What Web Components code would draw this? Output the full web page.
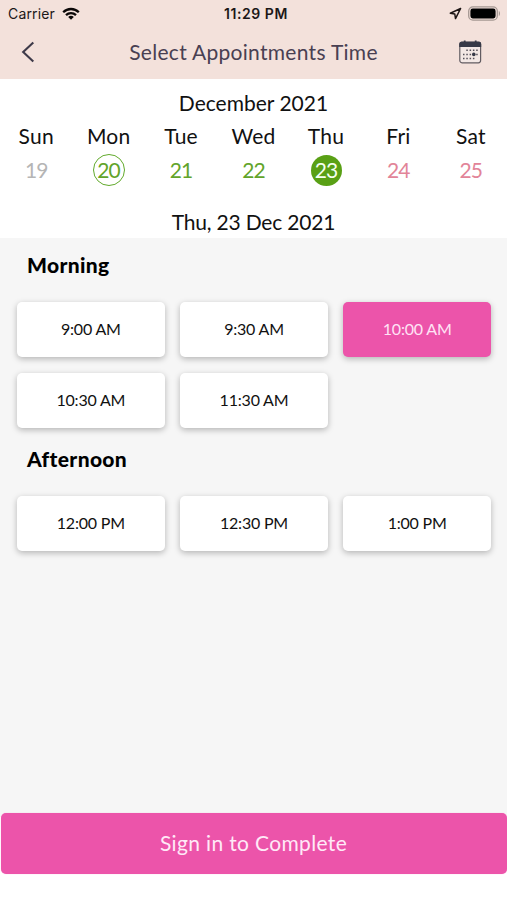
<!DOCTYPE html>
<html lang="en">
<head>
<meta charset="utf-8">
<title>Select Appointments Time</title>
<style>
html,body{margin:0;padding:0;background:#fff}
body{width:507px;height:900px;overflow:hidden;font-family:Lato,"Open Sans",sans-serif;color:#111}
</style>
</head>
<body>
<appointment-screen></appointment-screen>
<script>
const define = (name, html, setup) => {
  const template = document.createElement('template');
  template.innerHTML = html;
  customElements.define(name, class extends HTMLElement {
    constructor() {
      super();
      this.attachShadow({ mode: 'open' }).append(template.content.cloneNode(true));
      if (setup) setup(this.shadowRoot);
    }
  });
};

define('status-bar', `
<style>
:host{display:grid;grid-template-columns:1fr auto 1fr;align-items:center;height:28px;box-sizing:border-box;padding:0 6px 2px 8px;font-family:Inter,Roboto,sans-serif;font-size:14px;line-height:18px;color:#1c1717}
.left,.right{display:flex;align-items:center}
.left{gap:7px;letter-spacing:.15px}
.left span,.time{padding-top:2px}
.right{justify-content:flex-end;gap:6px}
.time{font-weight:600;letter-spacing:.55px;padding-left:3px}
svg{display:block}
</style>
<div class="left"><span>Carrier</span>
<svg width="18" height="13" viewBox="0 0 18 13" fill="none" stroke="#0b0808" stroke-width="2.3"><path d="M1.2 5.2C5.6.9 12.4.9 16.8 5.2"/><path d="M4 8.1c2.8-2.7 7.2-2.7 10 0"/><path d="M9 12.7L6.2 9.9c1.6-1.5 4-1.5 5.6 0z" fill="#0b0808" stroke="none"/></svg></div>
<span class="time">11:29 PM</span>
<div class="right">
<svg width="13" height="13" viewBox="0 0 13 13" fill="none" stroke="#1c1515" stroke-width="1.5" stroke-linejoin="round"><path d="M11.6 1.5L1.3 6.3l4.5.7.7 4.6z"/></svg>
<svg width="33" height="15" viewBox="0 0 33 15"><rect x=".7" y=".9" width="28.6" height="13.2" rx="4.2" fill="none" stroke="#a59893" stroke-width="1.3"/><rect x="2.4" y="2.6" width="25.2" height="9.8" rx="2.3" fill="#000"/><path d="M30.8 5v5c1.6-.6 1.6-4.4 0-5z" fill="#a59893"/></svg>
</div>`);

define('nav-bar', `
<style>
:host{display:grid;grid-template-columns:1fr auto 1fr;align-items:center;height:51px;box-sizing:border-box;padding:0 25px 3px 21px;color:#494052}
.title{font-size:21px;line-height:26px;letter-spacing:.3px;padding-left:4px}
.action{justify-self:end}
svg{display:block}
</style>
<svg width="14" height="22" viewBox="0 0 14 22" fill="none" stroke="#3e3a49" stroke-width="2.1"><path d="M12.3 1.6L2.2 11l10.1 9.4"/></svg>
<span class="title"><slot></slot></span>
<svg class="action" width="24" height="24" viewBox="0 0 24 24"><rect x="1.8" y="2.2" width="20.8" height="20.6" rx="2.2" fill="#f3e8e5" stroke="#625c62" stroke-width="1.2"/><path d="M1.2 7V4q0-2.2 2.2-2.2h17.8q2 0 2 2.2v3z" fill="#363947"/><path d="M6.7.6v3M17.7.6v3" stroke="#363947" stroke-width="1.8"/><g stroke="#55505a" stroke-width="1.5" stroke-dasharray="1.5 1.8"><path d="M8.3 10.3H20M5 14.4h15M5 18.4h11.5"/></g><circle cx="15.8" cy="14.4" r="1.8" fill="#363947"/></svg>`);

define('calendar-day', `
<style>
:host{display:flex;flex-direction:column;align-items:center;color:#62a42a;font-size:21px}
.name{color:#111;line-height:26px;letter-spacing:.2px}
.num{width:32px;height:32px;margin-top:5px;box-sizing:border-box;border-radius:50%;display:grid;place-items:center;line-height:30px;letter-spacing:-.9px}
:host([past]){color:#b5b5b5}
:host([weekend]){color:#e28498}
:host([today]) .num{border:1.5px solid #62aa2c}
:host([selected]) .num{background:#59a015;color:#f5fff0;background-clip:content-box;padding:.5px}
</style>
<span class="name"><slot name="name"></slot></span><span class="num"><slot></slot></span>`);

define('week-calendar', `
<style>
:host{display:block;height:159px;box-sizing:border-box;padding-top:11px;background:#fff;text-align:center}
.label{font-size:21px;line-height:26px;letter-spacing:0}
.days{display:grid;grid-template-columns:repeat(7,1fr);margin-top:7px}
.date{margin-top:23px;letter-spacing:-.2px}
</style>
<div class="label"><slot name="month"></slot></div>
<div class="days"><slot></slot></div>
<div class="label date"><slot name="date"></slot></div>`);

define('time-slot', `
<style>
:host{display:grid;place-items:center;height:55px;box-sizing:border-box;background:#fff;border-radius:5px;box-shadow:0 2px 6px rgba(0,0,0,.27);font-size:16px;line-height:20px;letter-spacing:-.2px;color:#111;padding-bottom:1px}
:host([selected]){background:#ec54aa;color:#ffe3f5}
</style>
<span><slot></slot></span>`);

define('time-group', `
<style>
:host{display:block}
.heading{margin:0;padding-left:10px;font-size:21px;line-height:28px;font-weight:900;color:#000;letter-spacing:.35px}
.grid{display:grid;grid-template-columns:repeat(3,1fr);gap:16px 15.5px;margin-top:23px}
</style>
<h2 class="heading"><slot name="heading"></slot></h2>
<div class="grid"><slot></slot></div>`);

define('primary-button', `
<style>
:host{display:grid;place-items:center;height:61px;box-sizing:border-box;border-radius:5px;background:#ec54aa;color:#ffe9f7;font-size:21px;line-height:26px;letter-spacing:.35px;padding:0 1px 1px 0;box-shadow:0 0 1px #f7a7d5}
</style>
<span><slot></slot></span>`);

define('appointment-screen', `
<style>
:host{display:flex;flex-direction:column;width:507px;height:900px;background:#fff}
header{background:#f3e1db;height:79px}
main{background:#f6f6f6;flex:1;box-sizing:border-box;padding:13px 16px 0 17px;display:flex;flex-direction:column;gap:17px}
footer{height:87px;padding-left:1px;box-sizing:border-box;background:linear-gradient(#f6f6f6 4px,#fff 4px)}
</style>
<header><status-bar></status-bar><nav-bar>Select Appointments Time</nav-bar></header>
<week-calendar>
<span slot="month">December 2021</span>
<calendar-day past><span slot="name">Sun</span>19</calendar-day>
<calendar-day today><span slot="name">Mon</span>20</calendar-day>
<calendar-day><span slot="name">Tue</span>21</calendar-day>
<calendar-day><span slot="name">Wed</span>22</calendar-day>
<calendar-day selected><span slot="name">Thu</span>23</calendar-day>
<calendar-day weekend><span slot="name">Fri</span>24</calendar-day>
<calendar-day weekend><span slot="name">Sat</span>25</calendar-day>
<span slot="date">Thu, 23 Dec 2021</span>
</week-calendar>
<main>
<time-group><span slot="heading">Morning</span><time-slot>9:00 AM</time-slot><time-slot>9:30 AM</time-slot><time-slot selected>10:00 AM</time-slot><time-slot>10:30 AM</time-slot><time-slot>11:30 AM</time-slot></time-group>
<time-group><span slot="heading">Afternoon</span><time-slot>12:00 PM</time-slot><time-slot>12:30 PM</time-slot><time-slot>1:00 PM</time-slot></time-group>
</main>
<footer><primary-button>Sign in to Complete</primary-button></footer>`);
</script>
</body>
</html>
